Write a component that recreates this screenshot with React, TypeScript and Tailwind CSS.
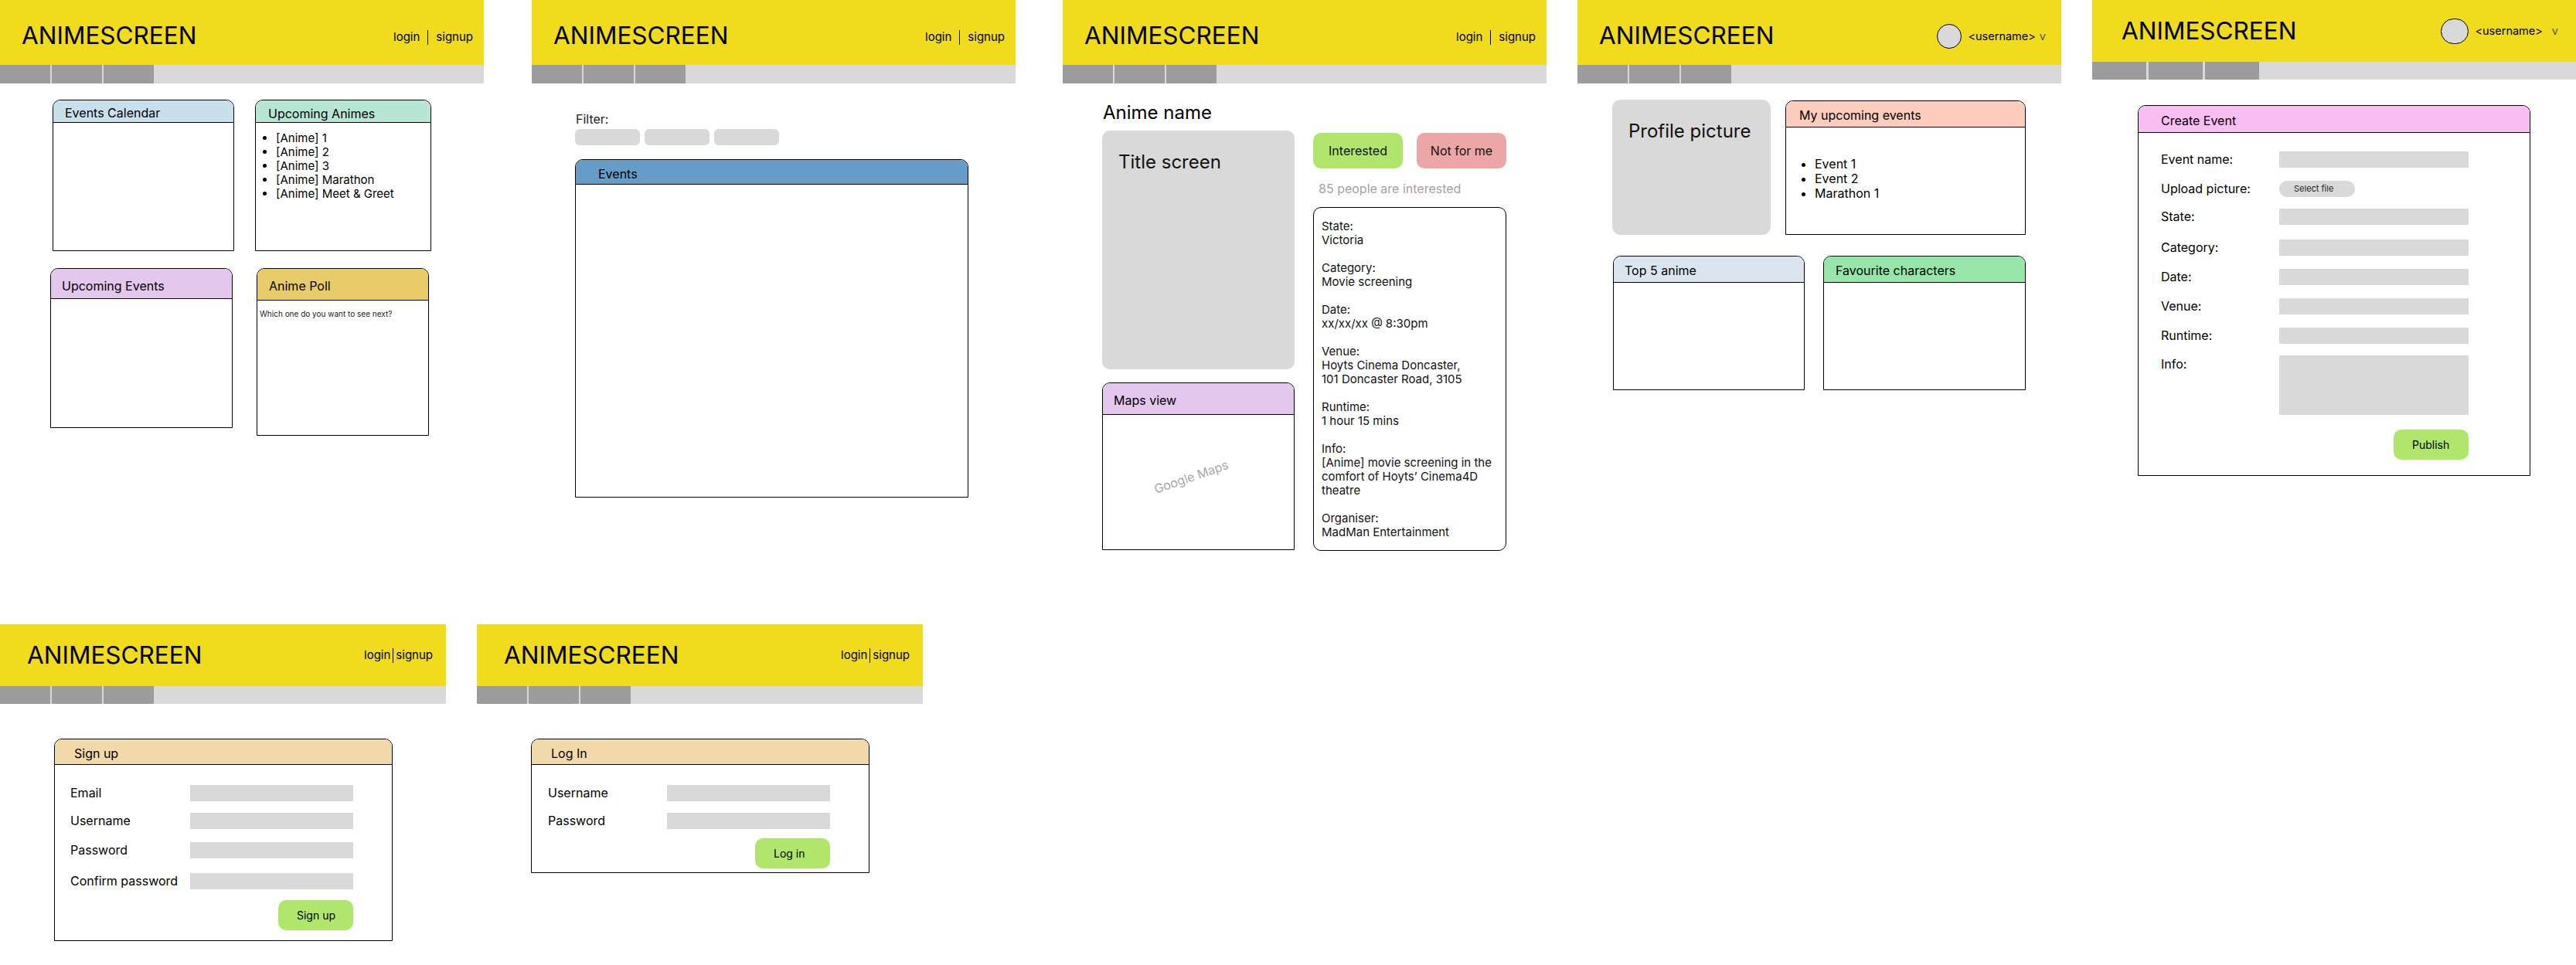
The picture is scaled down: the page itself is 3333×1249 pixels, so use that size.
import type { ReactNode } from "react";

type FrameProps = {
  className: string;
  headerClass: string;
  navClass: string;
  tabClass?: string;
  titleClass: string;
  right: ReactNode;
  children: ReactNode;
};

function Frame({ className, headerClass, navClass, tabClass = "w-[65px]", titleClass, right, children }: FrameProps) {
  return (
    <section className={`shrink-0 ${className}`}>
      <header className={`flex items-center justify-between bg-[#f0db1c] ${headerClass}`}>
        <h1 className={`text-[31.5px] leading-none text-black ${titleClass}`}>ANIMESCREEN</h1>
        {right}
      </header>
      <nav className={`flex gap-[2px] bg-[#d9d9d9] ${navClass}`}>
        <div className={`bg-[#9c9c9c] ${tabClass}`} />
        <div className={`bg-[#9c9c9c] ${tabClass}`} />
        <div className={`bg-[#9c9c9c] ${tabClass}`} />
      </nav>
      {children}
    </section>
  );
}

function AuthLinks({ tight }: { tight?: boolean }) {
  return (
    <div className={tight ? "flex items-center gap-[3px] pr-[17px] pt-[1px] text-[15px]" : "flex items-center gap-[10px] pr-[14px] pt-[12px] text-[15px]"}>
      <span>login</span>
      <span className="h-[19px] w-px bg-black" />
      <span>signup</span>
    </div>
  );
}

function UserMenu({ avatarClass, className, gapClass }: { avatarClass: string; className: string; gapClass: string }) {
  return (
    <div className={`flex items-center text-[14.5px] ${className}`}>
      <div className={`rounded-full border border-black bg-[#d9d9d9] ${avatarClass}`} />
      <span className="ml-[8px]">&lt;username&gt;</span>
      <span className={`text-[#555] ${gapClass}`}>v</span>
    </div>
  );
}

type CardProps = {
  title: string;
  className: string;
  headClass: string;
  titleClass: string;
  bodyClass?: string;
  children?: ReactNode;
};

function Card({ title, className, headClass, titleClass, bodyClass = "", children }: CardProps) {
  return (
    <div className={`flex shrink-0 flex-col overflow-hidden rounded-t-[10px] border border-black bg-white ${className}`}>
      <div className={`flex shrink-0 items-center border-b border-black ${headClass}`}>
        <span className={`text-[16px] leading-none ${titleClass}`}>{title}</span>
      </div>
      <div className={`min-h-0 flex-1 ${bodyClass}`}>{children}</div>
    </div>
  );
}

function Field({ label, className, labelClass, inputClass }: { label: string; className: string; labelClass: string; inputClass: string }) {
  return (
    <div className={`flex items-center ${className}`}>
      <span className={`pb-[2px] text-[16px] leading-none ${labelClass}`}>{label}</span>
      <div className={`bg-[#d9d9d9] ${inputClass}`} />
    </div>
  );
}

function GreenButton({ children, className }: { children: ReactNode; className: string }) {
  return <div className={`flex h-[39px] w-[97px] items-center rounded-[10px] bg-[#b0e66c] text-[14px] ${className}`}>{children}</div>;
}

function Home() {
  return (
    <Frame className="w-[626px]" headerClass="h-[84px]" navClass="h-[24px]" titleClass="pl-[28px] pt-[8px]" right={<AuthLinks />}>
      <div className="mt-[21px] flex">
        <Card title="Events Calendar" className="ml-[68px] h-[196px] w-[235px]" headClass="h-[29px] bg-[#c8dfec]" titleClass="pl-[15px] pt-[3px]" />
        <Card title="Upcoming Animes" className="ml-[27px] h-[196px] w-[228px]" headClass="h-[29px] bg-[#b8e6d5]" titleClass="pl-[16px] pt-[6px]">
          <ul className="mt-[11px] list-disc pl-[26px] text-[15px] leading-[18px]">
            <li>[Anime] 1</li>
            <li>[Anime] 2</li>
            <li>[Anime] 3</li>
            <li>[Anime] Marathon</li>
            <li>[Anime] Meet &amp; Greet</li>
          </ul>
        </Card>
      </div>
      <div className="mt-[22px] flex items-start">
        <Card title="Upcoming Events" className="ml-[65px] h-[207px] w-[236px]" headClass="h-[39px] bg-[#e3c7ec]" titleClass="pl-[14px] pt-[6px]" />
        <Card title="Anime Poll" className="ml-[31px] h-[217px] w-[223px]" headClass="h-[41px] bg-[#e9cc6a]" titleClass="pl-[15px] pt-[4px]">
          <p className="mt-[11px] pl-[3px] text-[10px] leading-[12px] text-[#222]">Which one do you want to see next?</p>
        </Card>
      </div>
    </Frame>
  );
}

function Events() {
  return (
    <Frame className="ml-[62px] w-[626px]" headerClass="h-[84px]" navClass="h-[24px]" titleClass="pl-[28px] pt-[8px]" right={<AuthLinks />}>
      <div className="pl-[56px]">
        <p className="mt-[37px] pl-[1px] text-[16px] leading-[18px] text-[#222]">Filter:</p>
        <div className="mt-[4px] flex gap-[6px]">
          <div className="h-[21px] w-[84px] rounded-[6px] bg-[#d9d9d9]" />
          <div className="h-[21px] w-[84px] rounded-[6px] bg-[#d9d9d9]" />
          <div className="h-[21px] w-[84px] rounded-[6px] bg-[#d9d9d9]" />
        </div>
        <Card title="Events" className="mt-[18px] h-[438px] w-[509px]" headClass="h-[32px] bg-[#659cc8]" titleClass="pl-[29px] pt-[4px]" />
      </div>
    </Frame>
  );
}

function AnimeDetail() {
  return (
    <Frame className="ml-[61px] w-[626px]" headerClass="h-[84px]" navClass="h-[24px]" titleClass="pl-[28px] pt-[8px]" right={<AuthLinks />}>
      <div className="flex pl-[51px]">
        <div className="w-[249px]">
          <h2 className="mt-[23px] pl-[1px] text-[24px] leading-[29px]">Anime name</h2>
          <div className="mt-[9px] h-[309px] rounded-[10px] bg-[#d9d9d9] pl-[21px] pt-[26px] text-[24px] leading-[29px] text-[#111]">Title screen</div>
          <Card title="Maps view" className="mt-[17px] h-[217px] w-[249px]" headClass="h-[41px] bg-[#e3c7ec]" titleClass="pl-[14px] pt-[4px]" bodyClass="flex items-center justify-center pb-[14px] pr-[18px]">
            <span className="-rotate-[19deg] text-[16px] text-[#a8a8a8]">Google Maps</span>
          </Card>
        </div>
        <div className="ml-[24px] w-[250px]">
          <div className="mt-[64px] flex gap-[18px]">
            <div className="flex h-[46px] w-[116px] items-center justify-center rounded-[10px] bg-[#b0e66c] text-[16px] text-[#111]">Interested</div>
            <div className="flex h-[46px] w-[116px] items-center justify-center rounded-[10px] bg-[#eca6a6] text-[16px] text-[#111]">Not for me</div>
          </div>
          <p className="mt-[17px] pl-[7px] text-[16px] leading-[19px] text-[#a89f9f]">85 people are interested</p>
          <div className="mt-[14px] h-[445px] rounded-[10px] border border-black pl-[10px] pt-[15px] text-[15px] leading-[18px] text-[#111]">
            <p>State:<br />Victoria</p>
            <p className="mt-[18px]">Category:<br />Movie screening</p>
            <p className="mt-[18px]">Date:<br />xx/xx/xx @ 8:30pm</p>
            <p className="mt-[18px]">Venue:<br />Hoyts Cinema Doncaster,<br />101 Doncaster Road, 3105</p>
            <p className="mt-[18px]">Runtime:<br />1 hour 15 mins</p>
            <p className="mt-[18px]">Info:<br />[Anime] movie screening in the<br />comfort of Hoyts’ Cinema4D<br />theatre</p>
            <p className="mt-[18px]">Organiser:<br />MadMan Entertainment</p>
          </div>
        </div>
      </div>
    </Frame>
  );
}

function Profile() {
  return (
    <Frame
      className="ml-[40px] w-[626px]"
      headerClass="h-[84px]"
      navClass="h-[24px]"
      titleClass="pl-[28px] pt-[8px]"
      right={<UserMenu className="pr-[20px] pt-[9px]" avatarClass="size-[32px]" gapClass="ml-[5px]" />}
    >
      <div className="mt-[21px] flex items-end">
        <div className="ml-[45px] h-[175px] w-[205px] rounded-[11px] bg-[#d9d9d9] pl-[21px] pt-[26px] text-[24px] leading-[29px] text-[#111]">Profile picture</div>
        <Card title="My upcoming events" className="ml-[19px] h-[174px] w-[311px]" headClass="h-[34px] bg-[#fccdbd]" titleClass="pl-[17px] pt-[3px]">
          <ul className="mt-[38px] list-disc pl-[37px] text-[16px] leading-[19px]">
            <li>Event 1</li>
            <li>Event 2</li>
            <li>Marathon 1</li>
          </ul>
        </Card>
      </div>
      <div className="mt-[27px] flex">
        <Card title="Top 5 anime" className="ml-[46px] h-[174px] w-[248px]" headClass="h-[34px] bg-[#dbe5ef]" titleClass="pl-[14px] pt-[3px]" />
        <Card title="Favourite characters" className="ml-[24px] h-[174px] w-[262px]" headClass="h-[34px] bg-[#95e6a8]" titleClass="pl-[15px] pt-[3px]" />
      </div>
    </Frame>
  );
}

function CreateEvent() {
  const rowLabel = "w-[153px]";
  const rowInput = "h-[21px] w-[245px]";
  return (
    <Frame
      className="ml-[40px] w-[626px]"
      headerClass="h-[80px]"
      navClass="h-[23px] gap-[3px]"
      tabClass="w-[70px]"
      titleClass="pl-[38px]"
      right={<UserMenu className="pr-[23px]" avatarClass="h-[33px] w-[36px]" gapClass="ml-[12px]" />}
    >
      <Card title="Create Event" className="ml-[59px] mt-[33px] h-[480px] w-[508px]" headClass="h-[35px] bg-[#f9bff3]" titleClass="pl-[29px] pt-[3px]" bodyClass="pl-[29px]">
        <Field label="Event name:" className="mt-[24px]" labelClass={rowLabel} inputClass={rowInput} />
        <div className="mt-[17px] flex items-center">
          <span className={`pb-[2px] text-[16px] leading-none ${rowLabel}`}>Upload picture:</span>
          <div className="flex h-[21px] w-[98px] items-center rounded-[10px] bg-[#d9d9d9] pl-[19px] text-[11px] text-[#222]">Select file</div>
        </div>
        <Field label="State:" className="mt-[15px]" labelClass={rowLabel} inputClass={rowInput} />
        <Field label="Category:" className="mt-[19px]" labelClass={rowLabel} inputClass={rowInput} />
        <Field label="Date:" className="mt-[17px]" labelClass={rowLabel} inputClass={rowInput} />
        <Field label="Venue:" className="mt-[17px]" labelClass={rowLabel} inputClass={rowInput} />
        <Field label="Runtime:" className="mt-[17px]" labelClass={rowLabel} inputClass={rowInput} />
        <div className="mt-[15px] flex items-start">
          <span className={`pt-[3px] text-[16px] leading-none ${rowLabel}`}>Info:</span>
          <div className="h-[77px] w-[245px] bg-[#d9d9d9]" />
        </div>
        <GreenButton className="ml-[301px] mt-[19px] pl-[24px]">Publish</GreenButton>
      </Card>
    </Frame>
  );
}

function SignUp() {
  const label = "w-[155px]";
  const input = "h-[21px] w-[211px]";
  return (
    <Frame className="w-[577px]" headerClass="h-[80px]" navClass="h-[23px]" titleClass="pl-[35px]" right={<AuthLinks tight />}>
      <Card title="Sign up" className="ml-[70px] mt-[45px] h-[262px] w-[438px]" headClass="h-[33px] bg-[#f2d9aa]" titleClass="pl-[25px] pt-[3px]" bodyClass="pl-[20px]">
        <Field label="Email" className="mt-[26px]" labelClass={label} inputClass={input} />
        <Field label="Username" className="mt-[15px]" labelClass={label} inputClass={input} />
        <Field label="Password" className="mt-[17px]" labelClass={label} inputClass={input} />
        <Field label="Confirm password" className="mt-[19px]" labelClass={label} inputClass={input} />
        <GreenButton className="ml-[269px] mt-[14px] pl-[24px]">Sign up</GreenButton>
      </Card>
    </Frame>
  );
}

function LogIn() {
  const label = "w-[154px]";
  const input = "h-[21px] w-[211px]";
  return (
    <Frame className="ml-[40px] w-[577px]" headerClass="h-[80px]" navClass="h-[23px]" titleClass="pl-[35px]" right={<AuthLinks tight />}>
      <Card title="Log In" className="ml-[70px] mt-[45px] h-[174px] w-[438px]" headClass="h-[33px] bg-[#f2d9aa]" titleClass="pl-[25px] pt-[3px]" bodyClass="pl-[21px]">
        <Field label="Username" className="mt-[26px]" labelClass={label} inputClass={input} />
        <Field label="Password" className="mt-[15px]" labelClass={label} inputClass={input} />
        <GreenButton className="ml-[268px] mt-[12px] pl-[24px]">Log in</GreenButton>
      </Card>
    </Frame>
  );
}

export default function App() {
  return (
    <div className="h-[1249px] w-[3333px] overflow-hidden bg-white font-['Inter',sans-serif] text-black">
      <div className="flex h-[808px]">
        <Home />
        <Events />
        <AnimeDetail />
        <Profile />
        <CreateEvent />
      </div>
      <div className="flex">
        <SignUp />
        <LogIn />
      </div>
    </div>
  );
}
